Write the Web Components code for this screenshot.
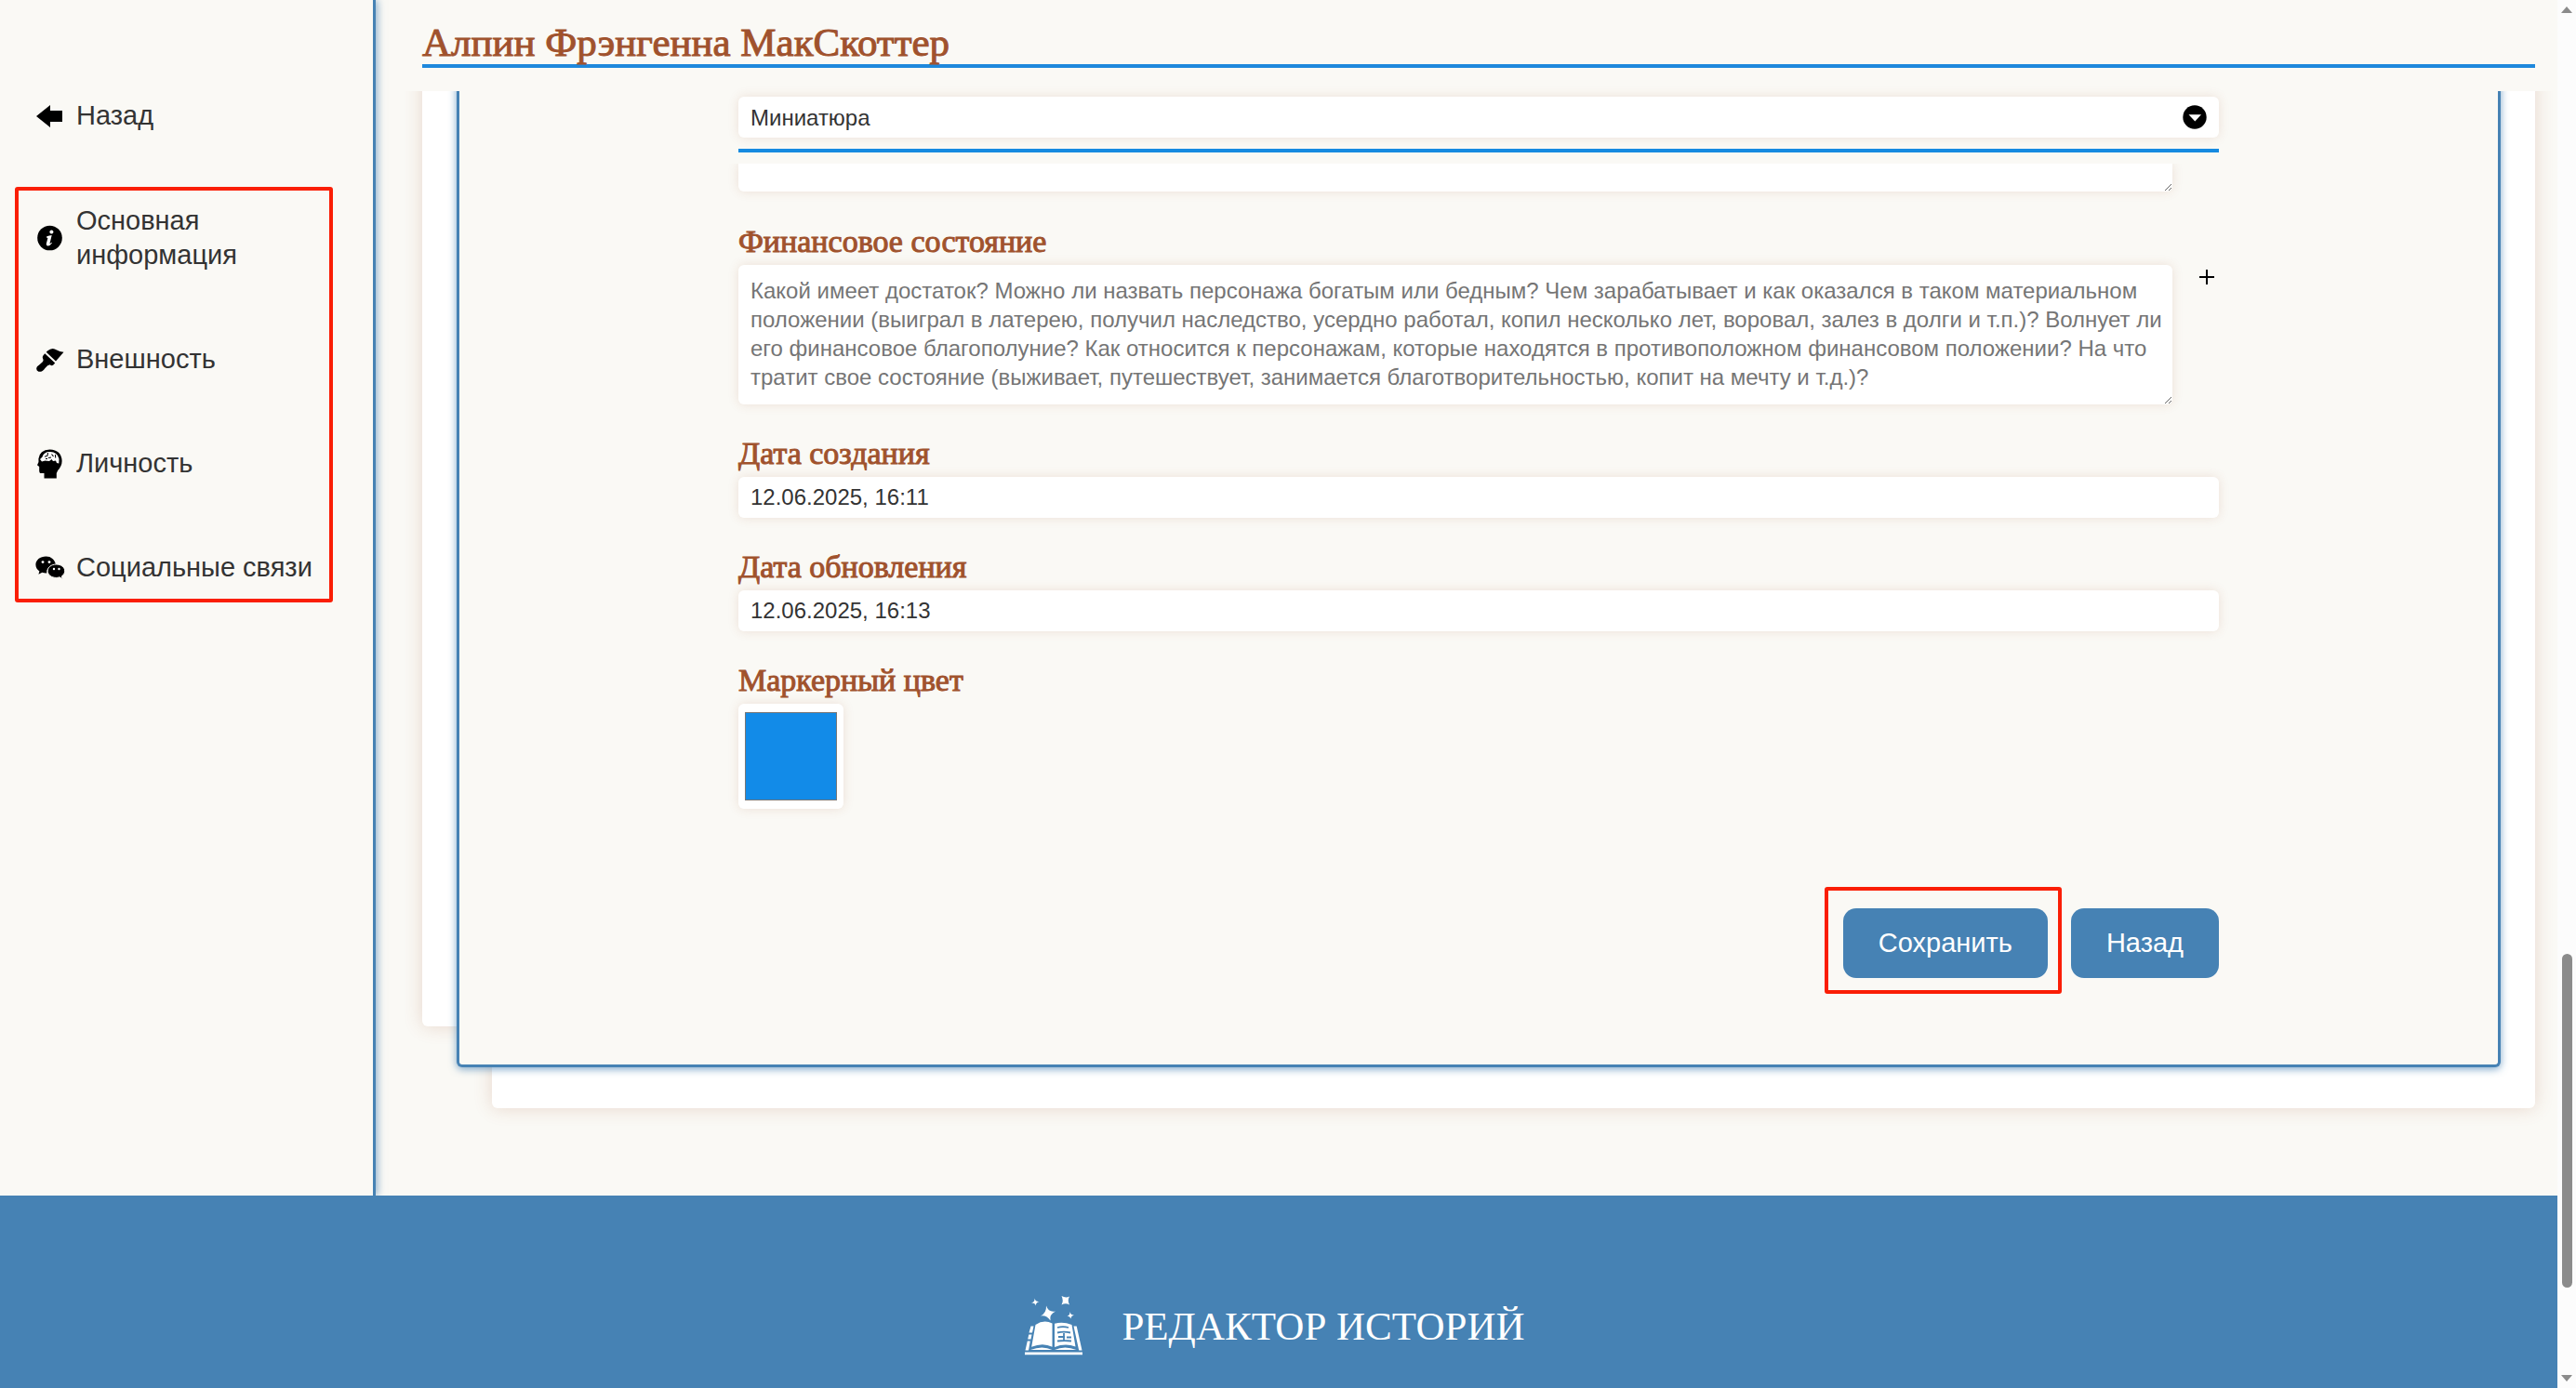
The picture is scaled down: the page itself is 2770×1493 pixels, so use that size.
<!DOCTYPE html>
<html lang="ru">
<head>
<meta charset="utf-8">
<title>Редактор историй</title>
<style>
  html, body { margin: 0; height: 100%; overflow: hidden; }
  body { background: #faf9f5; color: #333; font: 29px/37px "Liberation Sans", Arial, sans-serif; }
</style>
</head>
<body>
<story-app></story-app>

<script>
const define = (name, html, setup) => {
  const template = document.createElement('template');
  template.innerHTML = html;
  customElements.define(name, class extends HTMLElement {
    constructor() {
      super();
      this.attachShadow({ mode: 'open' }).append(template.content.cloneNode(true));
    }
    connectedCallback() { if (setup) setup(this, this.shadowRoot); }
  });
};

const icons = {
  back: '<path d="M1 16 16 4v6h13v12H16v6z"/>',
  info: '<circle cx="15.500" cy="16" r="13.300"/><circle cx="17.400" cy="9.400" r="2" fill="#fff"/><path d="M12.300 14.200q2.600-.900 5.400-1.200l-2.100 8.500q-.300 1.400 1.800-.700l.6.500q-2.200 3.200-4.500 3.100-2.200-.200-1.600-2.700l1.500-5.700-1.400-.400z" fill="#fff"/>',
  brush: '<path d="M13 6.500Q18 2 23 5.500q3 2 7.500 2.300L22 17.600 11.700 7.800zM10.200 9.200l11 10.300-2.100 2.300q-1.800.900-3.300-.500-2.600 0-5.300 3.600-3.200 4.600-7 3.800Q-.2 27 2 23.200q3-2.300 5.800-5 1.300-1.500.400-3.200-1-1.900.2-3.600z"/>',
  mind: '<path d="M3.400 10.500Q4.500 1 15.500.5 28 1 28.600 12.500q.200 5.500-4.400 10.500l-1.400 3v5.500H9.500V26H5.500q-1.500-.5-1.300-3.500v-3.600L2 17.200l1.500-3.200z"/><path d="M7.500 8.500Q9.500 2.500 16 3q7.500 0 9.500 7.500l-.2 5-2.300-.500-1-2.500-3 .5-1.500-2-2.500 2-4.500-.5-3.500 1-2-2.500z" fill="#fff"/><path d="M10 8.200l3-1 .5-3M14 9.500l3-.5M17.500 5.500l2 2.500M21.500 6l.2 3.500M11 10.500h2" fill="none" stroke="#000" stroke-width="1.100"/>',
  chat: '<path d="M11.500 3.600C5 3.600.4 7.600.4 12.500c0 3 1.600 5.300 4 7l-1 3.300 4-2q2.300.7 4.800.6-.7-7.800 9.800-8.700C21 7 17 3.600 11.500 3.600z"/><path d="M22.500 12c-5.300 0-9.300 3.200-9.300 7.200 0 4.200 4.300 7.200 9.300 7.200q1.800 0 3.500-.6l3.200 1.900-.8-2.900c2-1.400 3.300-3.300 3.300-5.600 0-4-4-7.200-9.200-7.200z" stroke="#faf9f5" stroke-width="1"/><g fill="#fff"><circle cx="8" cy="9.600" r="1.400"/><circle cx="15" cy="9.600" r="1.400"/><circle cx="20" cy="17" r="1.200"/><circle cx="25.500" cy="17" r="1.200"/></g>',
};

define('nav-link', `
  <style>
    :host { display: block; }
    a { display: flex; align-items: center; gap: 12px; color: inherit; text-decoration: none; }
    svg { flex: none; width: 32px; height: 32px; }
  </style>
  <a href="#"><svg viewBox="0 0 32 32" aria-hidden="true"></svg><span><slot></slot></span></a>
`, (host, root) => { root.querySelector('svg').innerHTML = icons[host.getAttribute('icon')]; });

define('side-nav', `
  <style>
    :host { display: block; position: relative; z-index: 2; box-sizing: border-box; width: 404px; border-right: 3px solid #4682b4;
      box-shadow: 2px 0 8px #4682b499; padding: 106px 43px 0 16px; background: #faf9f5; }
    nav-link { padding-left: 22px; }
    .sections { display: flex; flex-direction: column; gap: 75px; margin-top: 58px; padding: 14px 0 15px;
      border: 4px solid #fa1e05; border-radius: 3px; }
    .sections nav-link { padding-left: 18px; }
  </style>
  <nav>
    <nav-link icon="back">Назад</nav-link>
    <div class="sections">
      <nav-link icon="info">Основная информация</nav-link>
      <nav-link icon="brush">Внешность</nav-link>
      <nav-link icon="mind">Личность</nav-link>
      <nav-link icon="chat">Социальные связи</nav-link>
    </div>
  </nav>
`);

define('page-title', `
  <style>
    :host { display: block; position: relative; z-index: 1; background: #faf9f5; padding: 23px 24px 25px 50px; }
    h1 { margin: 0; font: 43px/46px "Liberation Serif", "Times New Roman", serif; color: #a0522d;
      -webkit-text-stroke: 1px #a0522d; border-bottom: 4px solid #1e88dc; }
  </style>
  <h1><slot></slot></h1>
`);

const fieldCss = `
  label { display: block; font: 34px/37px "Liberation Serif", "Times New Roman", serif; color: #a0522d;
    -webkit-text-stroke: 1px #a0522d; margin-bottom: 7px; }
  input, select, textarea { display: block; box-sizing: border-box; width: 100%; margin: 0; border: 0; border-radius: 6px;
    background: #fff; color: #333; font: 24px/31px "Liberation Sans", Arial, sans-serif;
    box-shadow: 0 0 12px #a0522d26; padding: 6px 13px; }
  input, select { height: 44px; }
`;

define('pick-field', `
  <style>${fieldCss}
    :host { display: block; position: relative; z-index: 1; background: #faf9f5; padding: 6px 0 12px; border: 0; }
    .box { display: grid; align-items: center; justify-items: end; border-bottom: 4px solid #168ae0; padding-bottom: 12px; }
    select { appearance: none; }
    select, svg { grid-area: 1 / 1; }
    svg { width: 26px; height: 26px; margin-right: 13px; pointer-events: none; }
  </style>
  <div class="box">
    <select aria-label="Раздел"><option>Миниатюра</option></select>
    <svg viewBox="0 0 26 26" aria-hidden="true"><circle cx="13" cy="13" r="12.700"/><path d="M6.500 10.300h13.500l-6.700 7.200z" fill="#fff"/></svg>
  </div>
`);

define('text-field', `
  <style>${fieldCss} :host { display: block; }</style>
  <label for="f"><slot></slot></label><input id="f" type="text">
`, (host, root) => { root.querySelector('input').value = host.getAttribute('value'); });

define('color-field', `
  <style>${fieldCss}
    :host { display: block; }
    input { width: 113px; height: 113px; padding: 5px; }
  </style>
  <label for="f"><slot></slot></label><input id="f" type="color">
`, (host, root) => { root.querySelector('input').value = host.getAttribute('value'); });

define('note-field', `
  <style>${fieldCss}
    :host { display: block; }
    .row { display: flex; align-items: flex-start; }
    textarea { flex: 1; height: 150px; padding: 12px 6px 12px 13px; resize: both; }
    textarea::placeholder { color: #757575; opacity: 1; }
    button { width: 50px; height: 26px; border: 0; background: none; padding: 0 4px 0 29px; }
    svg { display: block; width: 16px; height: 16px; }
  </style>
  <label for="f"><slot></slot></label>
  <div class="row"><textarea id="f"></textarea>
    <button type="button" aria-label="Добавить"><svg viewBox="0 0 16 16"><path d="M8 0v16M0 8h16" stroke="#000" stroke-width="2"/></svg></button></div>
`, (host, root) => { root.querySelector('textarea').placeholder = host.getAttribute('hint'); });

define('action-button', `
  <style>
    :host { display: block; }
    button { height: 75px; border: 0; border-radius: 14px; padding: 0 38px; background: #4682b4; color: #fff;
      font: 29px/37px "Liberation Sans", Arial, sans-serif; }
  </style>
  <button type="button"><slot></slot></button>
`);

define('character-form', `
  <style>
    :host { display: block; padding: 0 300px 76px; }
    form { display: flex; flex-direction: column; }
    .tail { height: 30px; margin-right: 50px; clip-path: inset(0 -20px -20px -20px); }
    .tail textarea { display: block; box-sizing: border-box; width: 100%; height: 30px; margin: 0; border: 0;
      border-radius: 0 0 6px 6px; background: #fff; box-shadow: 0 0 12px #a0522d26; resize: both; }
    .fields { display: flex; flex-direction: column; gap: 34px; margin-top: 35px; }
    .actions { display: flex; justify-content: flex-end; align-items: center; gap: 10px; margin-top: 84px; }
    .marked { border: 4px solid #fa1e05; border-radius: 3px; padding: 19px 11px 13px 16px; }
    .back { margin-top: 6px; }
  </style>
  <form>
    <pick-field></pick-field>
    <div class="tail"><textarea aria-label="Заметка"></textarea></div>
    <div class="fields">
      <note-field hint="Какой имеет достаток? Можно ли назвать персонажа богатым или бедным? Чем зарабатывает и как оказался в таком материальном положении (выиграл в латерею, получил наследство, усердно работал, копил несколько лет, воровал, залез в долги и т.п.)? Волнует ли его финансовое благополуние? Как относится к персонажам, которые находятся в противоположном финансовом положении? На что тратит свое состояние (выживает, путешествует, занимается благотворительностью, копит на мечту и т.д.)?">Финансовое состояние</note-field>
      <text-field value="12.06.2025, 16:11">Дата создания</text-field>
      <text-field value="12.06.2025, 16:13">Дата обновления</text-field>
      <color-field value="#128be8">Маркерный цвет</color-field>
    </div>
    <div class="actions">
      <div class="marked"><action-button>Сохранить</action-button></div>
      <action-button class="back">Назад</action-button>
    </div>
  </form>
`);

define('paper-stack', `
  <style>
    :host { display: grid; margin: 0 24px 94px 50px; }
    :host > * { grid-area: 1 / 1; }
    .sheet { background: #fff; border-radius: 6px; box-shadow: 0 0 20px #a0522d33; }
    .left { margin: -20px 75px 88px 0; }
    .right { margin: -20px 0 0 75px; }
    .page { margin: -20px 37px 44px; padding-top: 20px; background: #faf9f5; border: 3px solid #4682b4; border-top: 0;
      border-radius: 6px; box-shadow: 0 2px 8px #4682b4b3; }
  </style>
  <div class="sheet left"></div>
  <div class="sheet right"></div>
  <div class="page"><slot></slot></div>
`);

define('site-footer', `
  <style>
    :host { display: flex; justify-content: center; align-items: center; gap: 40px; box-sizing: border-box; padding: 106px 8px 106px 0;
      background: #4682b4; color: #fff; font: 43px/70px "Liberation Serif", "Times New Roman", serif; }
    svg { width: 64px; height: 66px; }
  </style>
  <svg viewBox="0 0 64 66" fill="#fff" aria-hidden="true">
    <path d="M0 60.500h62v2.800H0zM6.500 32.500h3L8 39.500H4.500zM4.300 41.500h3.200l-1 5H3.200zM2.800 48.500h3L4 58.500H.5zM52.500 32.500h3.200l5.800 26h-3.300z"/>
    <path d="M11.500 31q9-6 18-1.500v25.200q-10-5-22.300 0z"/>
    <path d="M32 29.800q9-2.600 18.500 1.200L54.500 54.500q-11-4-22.500.5z"/>
    <path d="M6 58q13-5 23.500 0zM32 58q11-5 23.500 0z"/>
    <path d="M35 34q6-1.600 12 0M35 39.500q7-1.600 14 0M36 44h7M45 44.500h5M42 40v8M35 48.500q8-1 15 0" fill="none" stroke="#4682b4" stroke-width="1.800"/>
    <path d="M23 10.500Q25.500 18 33 16.500 26 20 27.500 26.500 23.500 20.500 17 21.500 23.500 18 23 10.500zM10.500 2.500q1 4 5 3.500-4 1.200-3.500 4.500-1.300-3.600-5-3 4-1 3.500-5zM39.500 0q4.500 2.500 8.500.5-2.500 4.500 0 9-4-2.500-8.500 0 2.500-4.500 0-9.500zM48.500 17q1 3.800 4.500 3.500-3.500 1.200-3.500 4-1-3.300-4-2.800 3.300-1.200 3-4.700z"/>
  </svg>
  <span>РЕДАКТОР ИСТОРИЙ</span>
`);

define('scroll-rail', `
  <style>
    :host { display: flex; flex-direction: column; align-items: center; box-sizing: border-box; width: 20px; padding: 7px 0; background: #fcfcfc; }
    i { width: 0; border: 6px solid transparent; }
    .up { border-top: 0; border-bottom: 7px solid #8b8b8b; }
    .down { border-bottom: 0; border-top: 7px solid #8b8b8b; }
    .before { flex: 1012; }
    .thumb { flex: 359; width: 11px; border-radius: 6px; background: #8b8b8b; }
    .after { flex: 94; }
  </style>
  <i class="up"></i><div class="before"></div><div class="thumb"></div><div class="after"></div><i class="down"></i>
`);

define('story-app', `
  <style>
    :host { display: flex; height: 100%; overflow: hidden; }
    .view { flex: 1; min-width: 0; overflow: hidden; }
    .body { display: flex; }
    main { flex: 1; min-width: 0; }
    side-nav { flex: none; }
    site-footer { position: relative; z-index: 3; }
  </style>
  <div class="view">
    <div class="body">
      <side-nav></side-nav>
      <main>
        <page-title>Алпин Фрэнгенна МакСкоттер</page-title>
        <paper-stack><character-form></character-form></paper-stack>
      </main>
    </div>
    <site-footer></site-footer>
  </div>
  <scroll-rail></scroll-rail>
`);
</script>
</body>
</html>
